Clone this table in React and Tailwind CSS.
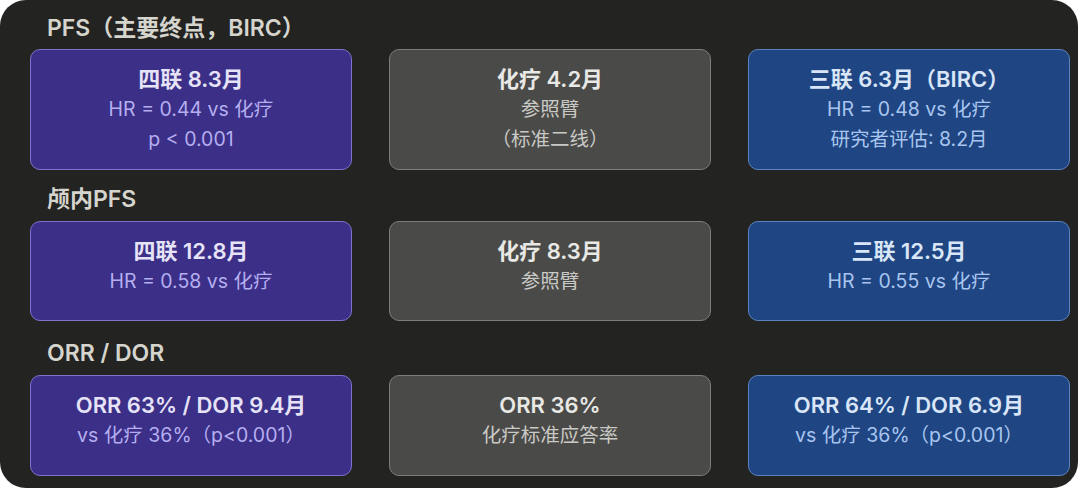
const themes = {
  purple: {
    card: 'bg-[#3b2f87] border-[#7d72cc]',
    title: 'text-[#e6e3f7]',
    sub: 'text-[#b5aef0]',
  },
  gray: {
    card: 'bg-[#4a4a48] border-[#7d7d7a]',
    title: 'text-[#e8e8e5]',
    sub: 'text-[#c9c9c5]',
  },
  blue: {
    card: 'bg-[#1f4583] border-[#5b82c0]',
    title: 'text-[#d9e6f8]',
    sub: 'text-[#a8c5ef]',
  },
};

const sections = [
  {
    label: 'PFS（主要终点，BIRC）',
    labelCls: 'mt-[13px]',
    cardCls: 'mt-[6px] h-[121px]',
    cards: [
      { theme: 'purple', title: '四联 8.3月', lines: ['HR = 0.44 vs 化疗', 'p < 0.001'] },
      { theme: 'gray', title: '化疗 4.2月', lines: ['参照臂', '（标准二线）'] },
      { theme: 'blue', title: '三联 6.3月（BIRC）', lines: ['HR = 0.48 vs 化疗', '研究者评估: 8.2月'] },
    ],
  },
  {
    label: '颅内PFS',
    labelCls: 'mt-[14px]',
    cardCls: 'mt-[7px] h-[100px]',
    cards: [
      { theme: 'purple', title: '四联 12.8月', lines: ['HR = 0.58 vs 化疗'] },
      { theme: 'gray', title: '化疗 8.3月', lines: ['参照臂'] },
      { theme: 'blue', title: '三联 12.5月', lines: ['HR = 0.55 vs 化疗'] },
    ],
  },
  {
    label: 'ORR / DOR',
    labelCls: 'mt-[17px]',
    cardCls: 'mt-[7px] h-[101px]',
    cards: [
      { theme: 'purple', title: 'ORR 63% / DOR 9.4月', lines: ['vs 化疗 36%（p<0.001）'] },
      { theme: 'gray', title: 'ORR 36%', lines: ['化疗标准应答率'] },
      { theme: 'blue', title: 'ORR 64% / DOR 6.9月', lines: ['vs 化疗 36%（p<0.001）'] },
    ],
  },
];

function Card({ theme, title, lines, className }) {
  const t = themes[theme];
  return (
    <div className={`rounded-[10px] border pt-[14px] text-center ${t.card} ${className}`}>
      <div className={`text-[22px] leading-[30px] font-semibold ${t.title}`}>{title}</div>
      {lines.map((l) => (
        <div key={l} className={`text-[19.5px] leading-[30px] ${t.sub}`}>{l}</div>
      ))}
    </div>
  );
}

export default function App() {
  return (
    <div
      className="h-[490px] w-[1080px] bg-white"
      style={{ fontFamily: 'Inter, "Noto Sans CJK SC", sans-serif' }}
    >
      <div className="flex h-[488px] w-[1078px] flex-col rounded-[26px] bg-[#232321] pl-[30px] pr-[8px]">
        {sections.map((s) => (
          <div key={s.label} className="flex flex-col">
            <div className={`h-[30px] pl-[17px] text-[23px] leading-[30px] font-semibold text-[#d5d5ce] ${s.labelCls}`}>
              {s.label}
            </div>
            <div className="grid grid-cols-[322px_322px_322px] gap-x-[37px]">
              {s.cards.map((c) => (
                <Card key={c.title} {...c} className={s.cardCls} />
              ))}
            </div>
          </div>
        ))}
      </div>
    </div>
  );
}
